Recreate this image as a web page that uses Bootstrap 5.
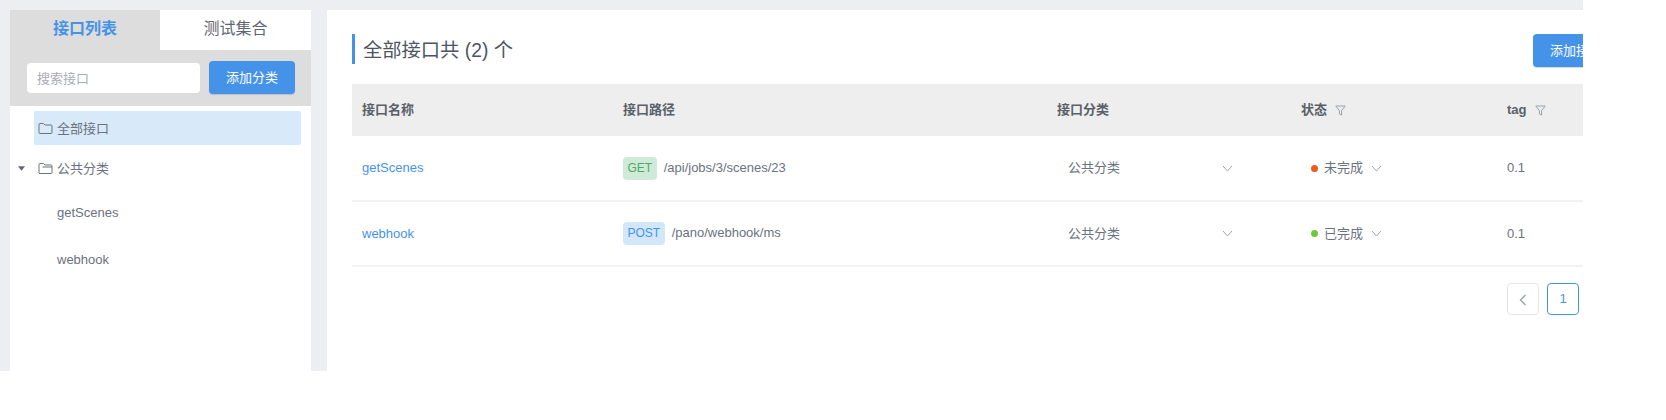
<!DOCTYPE html>
<html lang="zh"><head><meta charset="utf-8"><title>接口列表</title>
<link href="https://cdn.jsdelivr.net/npm/bootstrap@5.3.0/dist/css/bootstrap.min.css" rel="stylesheet">
<style>
html,body{background:#fff;margin:0;height:420px;overflow:hidden}
body{font-family:"Liberation Sans","Noto Sans CJK SC",sans-serif;font-size:13px;color:#6b7280}
.app-frame{width:1583px;height:371px;background:#eceef2;overflow:hidden;padding-top:10px;gap:16px}
.side-pane{width:301px;margin-left:10px;flex:none;background:#fff}
.tab-a,.tab-b{width:150px;height:40px;font-size:16px;line-height:38px;text-align:center}
.tab-a{background:#ddd;color:#4593e9;font-weight:600}
.tab-b{background:#fff;color:#5f6673;flex:1}
.tool-bar{background:#ddd;height:56px;padding:11px 16px 0 17px;gap:9px}
.search-box{width:173px;height:30px;margin-top:2px;background:#fff;border-radius:4px;border:0;padding:0 10px;font-size:13px;line-height:31px;color:#a9adb5}
.blue-btn{background:#4593e9;color:#fff;border:0;border-radius:4px;font-size:13px;height:33px;padding:0;box-shadow:0 1px 1px rgba(0,0,0,.15)}
.add-cat{width:86px}
.tree-sel{margin:5px 10px 0 24px;height:34px;background:#d8e9f9;border-radius:2px;padding-left:4px;gap:4px}
.tree-row{height:34px;gap:4px}
.tree-sel span,.tree-row span{padding-top:2px}
.tree-parent{margin-top:6px;padding-left:8px}
.tree-caret{margin-right:9px}
.tree-leaf{padding-left:47px;height:47px;line-height:47px}
.tree-leaf.first{margin-top:4px}
.main-pane{background:#fff;width:1300px;flex:none;padding:24px 25px;overflow:hidden}
.head-row{height:30px;width:1300px}
.page-title{border-left:3px solid #4593e9;padding-left:8px;height:30px;line-height:33px;font-size:19.3px;font-weight:400;color:#4b5563;margin:0}
.add-api{width:119px;margin-left:auto;text-align:left;padding-left:17px;flex:none}
.api-table{table-layout:fixed;width:1300px;margin:20px 0 0;color:#6b7280;font-size:13px}
.api-table th{background:#eeeeee;height:52px;padding:0 9px;vertical-align:middle;font-size:13px;font-weight:600;color:#5a6069;border:0}
.api-table th:first-child{padding-left:10px}
.api-table td{height:65px;padding:0 9px;vertical-align:middle;border-bottom:2px solid #f1f2f4;box-shadow:none;background:transparent;color:#6b7280}
.api-link{color:#4593e9;text-decoration:none;padding-left:1px}
.verb{display:inline-block;height:23px;line-height:22px;padding:0 4.5px;border-radius:4px;font-size:12px;margin-right:7px}
.verb-get{background:#cfead9;color:#4caa64}
.verb-post{background:#d3e7fa;color:#4593e9}
.cell-sel{padding:0 11px;width:187px}
.state-cell{padding-left:10px}
.state-label{margin-left:6px;margin-right:8px}
.dot{width:7px;height:7px;border-radius:50%;flex:none}
.pager-row{gap:8px;padding-top:16px;width:1227px}
.pg{width:32px;height:32px;border-radius:4px;background:#fff;border:1.5px solid #e3e5e8;line-height:29px;text-align:center;color:#9aa0a8}
.pg-on{border-color:#4593e9;color:#4593e9}
.fold{color:#6b7280;flex:none}
</style></head><body>
<div class="app-frame d-flex align-items-start">
 <aside class="side-pane h-100">
  <div class="d-flex"><div class="tab-a">接口列表</div><div class="tab-b">测试集合</div></div>
  <div class="tool-bar d-flex align-items-start"><div class="search-box">搜索接口</div><button class="blue-btn add-cat" type="button">添加分类</button></div>
  <div class="tree-sel d-flex align-items-center">
   <svg class="fold" width="15" height="13" viewBox="0 0 15 13" fill="none" stroke="currentColor"><path d="M1 2.5a1 1 0 0 1 1-1h3.5l1.5 1.5h6a1 1 0 0 1 1 1v6.500a1 1 0 0 1-1 1H2a1 1 0 0 1-1-1z"/></svg>
   <span>全部接口</span></div>
  <div class="tree-row tree-parent d-flex align-items-center">
   <svg class="tree-caret" width="7" height="5" viewBox="0 0 8 5" fill="#5f6673"><path d="M0 0h8L4 5z"/></svg>
   <svg class="fold" width="15" height="13" viewBox="0 0 15 13" fill="none" stroke="currentColor"><path d="M1 11V2.500a1 1 0 0 1 1-1h3.500L7 3h6a1 1 0 0 1 1 1v1H4.500M1 11.500h12a1 1 0 0 0 1-1V5"/></svg>
   <span>公共分类</span></div>
  <div class="tree-leaf first">getScenes</div>
  <div class="tree-leaf">webhook</div>
 </aside>
 <main class="main-pane h-100">
  <div class="head-row d-flex"><h1 class="page-title">全部接口共 (2) 个</h1><button class="blue-btn add-api" type="button">添加接口</button></div>
  <table class="table api-table">
   <colgroup><col style="width:262px"><col style="width:434px"><col style="width:244px"><col style="width:206px"><col style="width:154px"></colgroup>
   <thead><tr><th>接口名称</th><th>接口路径</th><th>接口分类</th>
    <th>状态<svg class="ms-2" width="11" height="11" viewBox="0 0 11 11" fill="none" stroke="#9aa0a8"><path d="M.8 1h9.400L6.600 5.500V10L4.400 8.800V5.500z"/></svg></th>
    <th>tag<svg class="ms-2" width="11" height="11" viewBox="0 0 11 11" fill="none" stroke="#9aa0a8"><path d="M.8 1h9.400L6.600 5.500V10L4.400 8.800V5.500z"/></svg></th></tr></thead>
   <tbody>
    <tr><td><a class="api-link" href="#">getScenes</a></td>
     <td><span class="verb verb-get">GET</span>/api/jobs/3/scenes/23</td>
     <td><div class="cell-sel d-flex justify-content-between align-items-center"><span>公共分类</span><svg width="11" height="7" viewBox="0 0 11 7" fill="none" stroke="#a0a5ad"><path d="M1 1l4.500 5L10 1"/></svg></div></td>
     <td><div class="state-cell d-flex align-items-center"><i class="dot" style="background:#f05a22"></i><span class="state-label">未完成</span><svg width="11" height="7" viewBox="0 0 11 7" fill="none" stroke="#a0a5ad"><path d="M1 1l4.500 5L10 1"/></svg></div></td>
     <td>0.1</td></tr>
    <tr><td><a class="api-link" href="#">webhook</a></td>
     <td><span class="verb verb-post">POST</span>/pano/webhook/ms</td>
     <td><div class="cell-sel d-flex justify-content-between align-items-center"><span>公共分类</span><svg width="11" height="7" viewBox="0 0 11 7" fill="none" stroke="#a0a5ad"><path d="M1 1l4.500 5L10 1"/></svg></div></td>
     <td><div class="state-cell d-flex align-items-center"><i class="dot" style="background:#6cc83c"></i><span class="state-label">已完成</span><svg width="11" height="7" viewBox="0 0 11 7" fill="none" stroke="#a0a5ad"><path d="M1 1l4.500 5L10 1"/></svg></div></td>
     <td>0.1</td></tr>
   </tbody></table>
  <div class="pager-row d-flex justify-content-end">
   <div class="pg"><svg width="8" height="12" viewBox="0 0 8 12" fill="none" stroke="#9aa0a8" stroke-width="1.300"><path d="M6.500 1L1.500 6l5 5"/></svg></div>
   <div class="pg pg-on">1</div>
  </div>
 </main>
</div>
<script src="https://cdn.jsdelivr.net/npm/bootstrap@5.3.0/dist/js/bootstrap.bundle.min.js"></script>
</body></html>
